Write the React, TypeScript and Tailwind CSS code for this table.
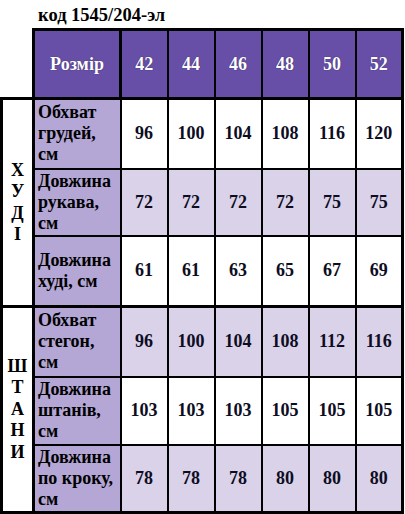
import React from "react";

type Row = {
  label: React.ReactNode;
  values: number[];
  light: boolean;
};

const sizes = [42, 44, 46, 48, 50, 52];

const hoodie: Row[] = [
  { label: <>Обхват<br />грудей,<br />см</>, values: [96, 100, 104, 108, 116, 120], light: false },
  { label: <>Довжина<br />рукава,<br />см</>, values: [72, 72, 72, 72, 75, 75], light: true },
  { label: <>Довжина<br />худі, см</>, values: [61, 61, 63, 65, 67, 69], light: false },
];

const pants: Row[] = [
  { label: <>Обхват<br />стегон,<br />см</>, values: [96, 100, 104, 108, 112, 116], light: true },
  { label: <>Довжина<br />штанів,<br />см</>, values: [103, 103, 103, 105, 105, 105], light: false },
  { label: <>Довжина<br />по кроку,<br />см</>, values: [78, 78, 78, 80, 80, 80], light: true },
];

const hoodieHeights = ["h-[70px]", "h-[67px]", "h-[71px]"];
const pantsHeights = ["h-[70px]", "h-[68px]", "h-[68px]"];

function SectionRows({
  rows,
  letters,
  heights,
}: {
  rows: Row[];
  letters: string[];
  heights: string[];
}) {
  return (
    <>
      {rows.map((row, i) => (
        <tr key={i} className={heights[i]}>
          {i === 0 && (
            <td
              rowSpan={rows.length}
              className="bg-white border-[3px] border-black text-center align-middle leading-[21.5px]"
            >
              {letters.map((l) => (
                <div key={l}>{l}</div>
              ))}
            </td>
          )}
          <td
            className={`bg-[#b4a7d6] pl-[3px] text-left align-middle leading-[21px] border-black border-[2px] ${
              i === 0 ? "border-t-[3px]" : ""
            } ${i === rows.length - 1 ? "border-b-[3px]" : ""}`}
          >
            {row.label}
          </td>
          {row.values.map((v, j) => (
            <td
              key={j}
              className={`${row.light ? "bg-[#d9d2e9]" : "bg-white"} text-center align-middle text-[#0d0d1f] border-black border-[2px] ${
                i === 0 ? "border-t-[3px]" : ""
              } ${i === rows.length - 1 ? "border-b-[3px]" : ""} ${j === 5 ? "border-r-[3px]" : ""}`}
            >
              {v}
            </td>
          ))}
        </tr>
      ))}
    </>
  );
}

export default function App() {
  return (
    <div className="w-[405px] h-[514px] bg-white font-['Liberation_Serif',serif] font-bold text-[18px] text-black">
      <div className="h-[28px] pl-[38px] pt-[5px] text-[18.5px] leading-[21px]">код 1545/204-эл</div>
      <table className="table-fixed border-collapse w-[403px]">
        <colgroup>
          <col className="w-[32px]" />
          <col className="w-[87px]" />
          <col className="w-[47px]" />
          <col className="w-[47px]" />
          <col className="w-[47px]" />
          <col className="w-[47px]" />
          <col className="w-[47px]" />
          <col className="w-[47px]" />
        </colgroup>
        <thead>
          <tr className="h-[69px]">
            <th className="bg-white border-0"></th>
            <th className="bg-[#674ea7] text-white border-[3px] border-black text-center [text-shadow:0_0_1px_#2a1f4a]">
              Розмір
            </th>
            {sizes.map((s, j) => (
              <th
                key={s}
                className={`bg-[#674ea7] text-white border-black border-[2px] border-t-[3px] border-b-[3px] text-center [text-shadow:0_0_1px_#2a1f4a] ${
                  j === 5 ? "border-r-[3px]" : ""
                }`}
              >
                {s}
              </th>
            ))}
          </tr>
        </thead>
        <tbody>
          <SectionRows rows={hoodie} letters={["Х", "У", "Д", "І"]} heights={hoodieHeights} />
          <SectionRows rows={pants} letters={["Ш", "Т", "А", "Н", "И"]} heights={pantsHeights} />
        </tbody>
      </table>
    </div>
  );
}
